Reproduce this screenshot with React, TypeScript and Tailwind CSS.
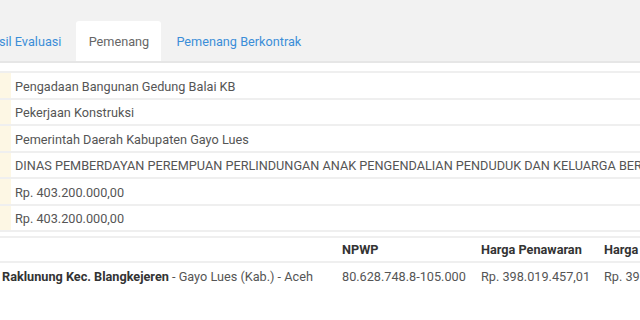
import React from 'react';

const rows = [
  'Pengadaan Bangunan Gedung Balai KB',
  'Pekerjaan Konstruksi',
  'Pemerintah Daerah Kabupaten Gayo Lues',
  'DINAS PEMBERDAYAN PEREMPUAN PERLINDUNGAN ANAK PENGENDALIAN PENDUDUK DAN KELUARGA BERENCANA',
  'Rp. 403.200.000,00',
  'Rp. 403.200.000,00',
];

export default function App() {
  return (
    <div className="w-[640px] h-[320px] overflow-hidden bg-white font-['Roboto',sans-serif] text-[12.7px] text-[#555]">
      {/* tab bar */}
      <div className="h-[63px] bg-[#f2f2f2] border-b-2 border-[#e6e6e6] flex items-end">
        <div className="flex items-end -ml-[32px] whitespace-nowrap">
          <div className="h-[40px] pt-[1px] px-[15px] flex items-center text-[#3b8ed8]">Hasil Evaluasi</div>
          <div className="h-[40px] pt-[1px] flex items-center bg-white rounded-t-[3px] text-[#666] w-[85px] justify-center">Pemenang</div>
          <div className="h-[40px] pt-[1px] px-[15px] flex items-center text-[#3b8ed8]">Pemenang Berkontrak</div>
        </div>
      </div>

      {/* detail paket */}
      <div className="pt-[8px] whitespace-nowrap">
        {rows.map((r, i) => (
          <div key={i} className="flex border-t-2 border-[#efefef] h-[26.5px]">
            <div className="w-[11px] shrink-0 bg-[#fdf7e4]" />
            <div className="pl-[4px] pt-[2px] flex items-center text-[#555]">{r}</div>
          </div>
        ))}
        <div className="border-t-2 border-[#efefef]" />
      </div>

      {/* pemenang */}
      <div className="mt-[4px] whitespace-nowrap">
        <div className="flex h-[27px] items-center border-t-2 border-[#efefef] border-b-2 font-bold text-[#333]">
          <div className="w-[342px] shrink-0" />
          <div className="w-[139px] shrink-0">NPWP</div>
          <div className="w-[123px] shrink-0">Harga Penawaran</div>
          <div>Harga Terkoreksi</div>
        </div>
        <div className="flex h-[27px] items-center">
          <div className="w-[342px] shrink-0 pl-[2px]">
            <span className="font-bold text-[#333]">Raklunung Kec. Blangkejeren</span> - Gayo Lues (Kab.) - Aceh
          </div>
          <div className="w-[139px] shrink-0">80.628.748.8-105.000</div>
          <div className="w-[123px] shrink-0">Rp. 398.019.457,01</div>
          <div>Rp. 398.019.457,01</div>
        </div>
      </div>
    </div>
  );
}
